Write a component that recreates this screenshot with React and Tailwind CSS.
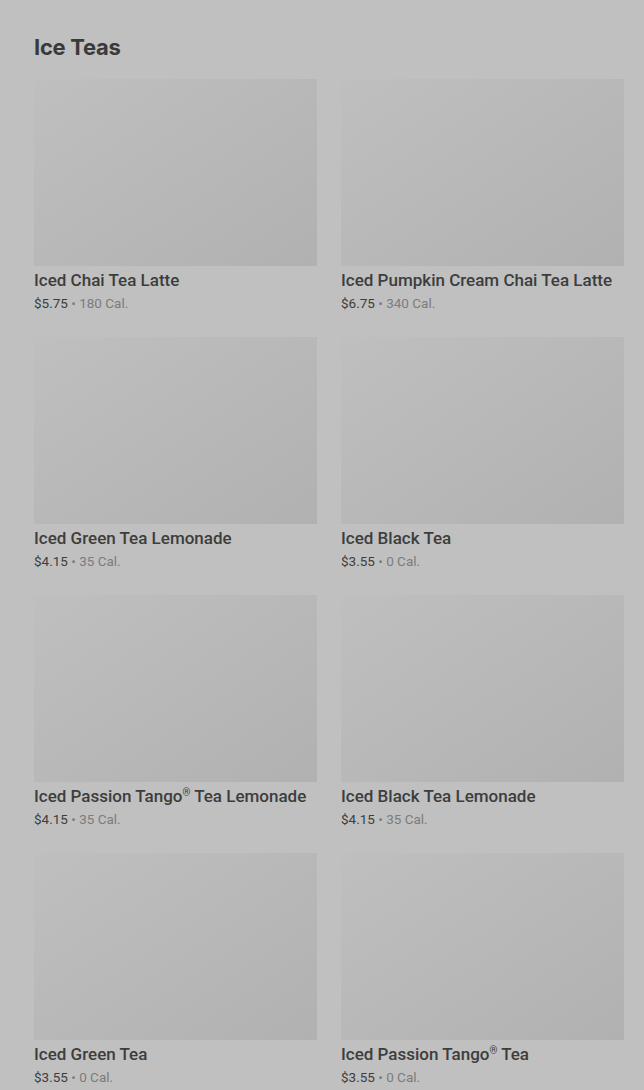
import React from 'react';

const items = [
    { name: 'Iced Chai Tea Latte', price: '$5.75', cal: '180 Cal.' },
    { name: 'Iced Pumpkin Cream Chai Tea Latte', price: '$6.75', cal: '340 Cal.' },
    { name: 'Iced Green Tea Lemonade', price: '$4.15', cal: '35 Cal.' },
    { name: 'Iced Black Tea', price: '$3.55', cal: '0 Cal.' },
    { name: 'Iced Passion Tango', reg: true, rest: ' Tea Lemonade', price: '$4.15', cal: '35 Cal.' },
    { name: 'Iced Black Tea Lemonade', price: '$4.15', cal: '35 Cal.' },
    { name: 'Iced Green Tea', price: '$3.55', cal: '0 Cal.' },
    { name: 'Iced Passion Tango', reg: true, rest: ' Tea', price: '$3.55', cal: '0 Cal.' },
];

const ItemCard = ({ item }) => (
    <div className="flex flex-col">
        <div className="h-[187px] w-full bg-gradient-to-br from-[#bfbfbf] to-[#b1b1b1]" />
        <div className="mt-[2px] h-6 text-[17px] leading-6 font-medium text-[#3d3d3d] whitespace-nowrap">
            {item.name}
            {item.reg && <span className="relative -top-[6px] text-[10px] leading-[0]">®</span>}
            {item.rest}
        </div>
        <div className="mt-[1px] text-[13.5px] leading-5 text-[#3d3d3d]">
            {item.price}
            <span className="text-[#7c7c7c]"> • {item.cal}</span>
        </div>
    </div>
);

const App = () => {
    return (
        <div className="w-[644px] h-[1090px] overflow-hidden bg-[#c0c0c0] pl-[34px] pr-[20px] pt-[31px] font-['Roboto',sans-serif]">
            <h2 className="text-[22px] leading-8 font-bold text-[#3a3a3a] font-['Inter',sans-serif] tracking-[-0.3px]">
                Ice Teas
            </h2>
            <div className="mt-[16px] grid grid-cols-2 gap-x-[24px] gap-y-[24px]">
                {items.map((item, i) => (
                    <ItemCard key={i} item={item} />
                ))}
            </div>
        </div>
    );
};

export default App;
